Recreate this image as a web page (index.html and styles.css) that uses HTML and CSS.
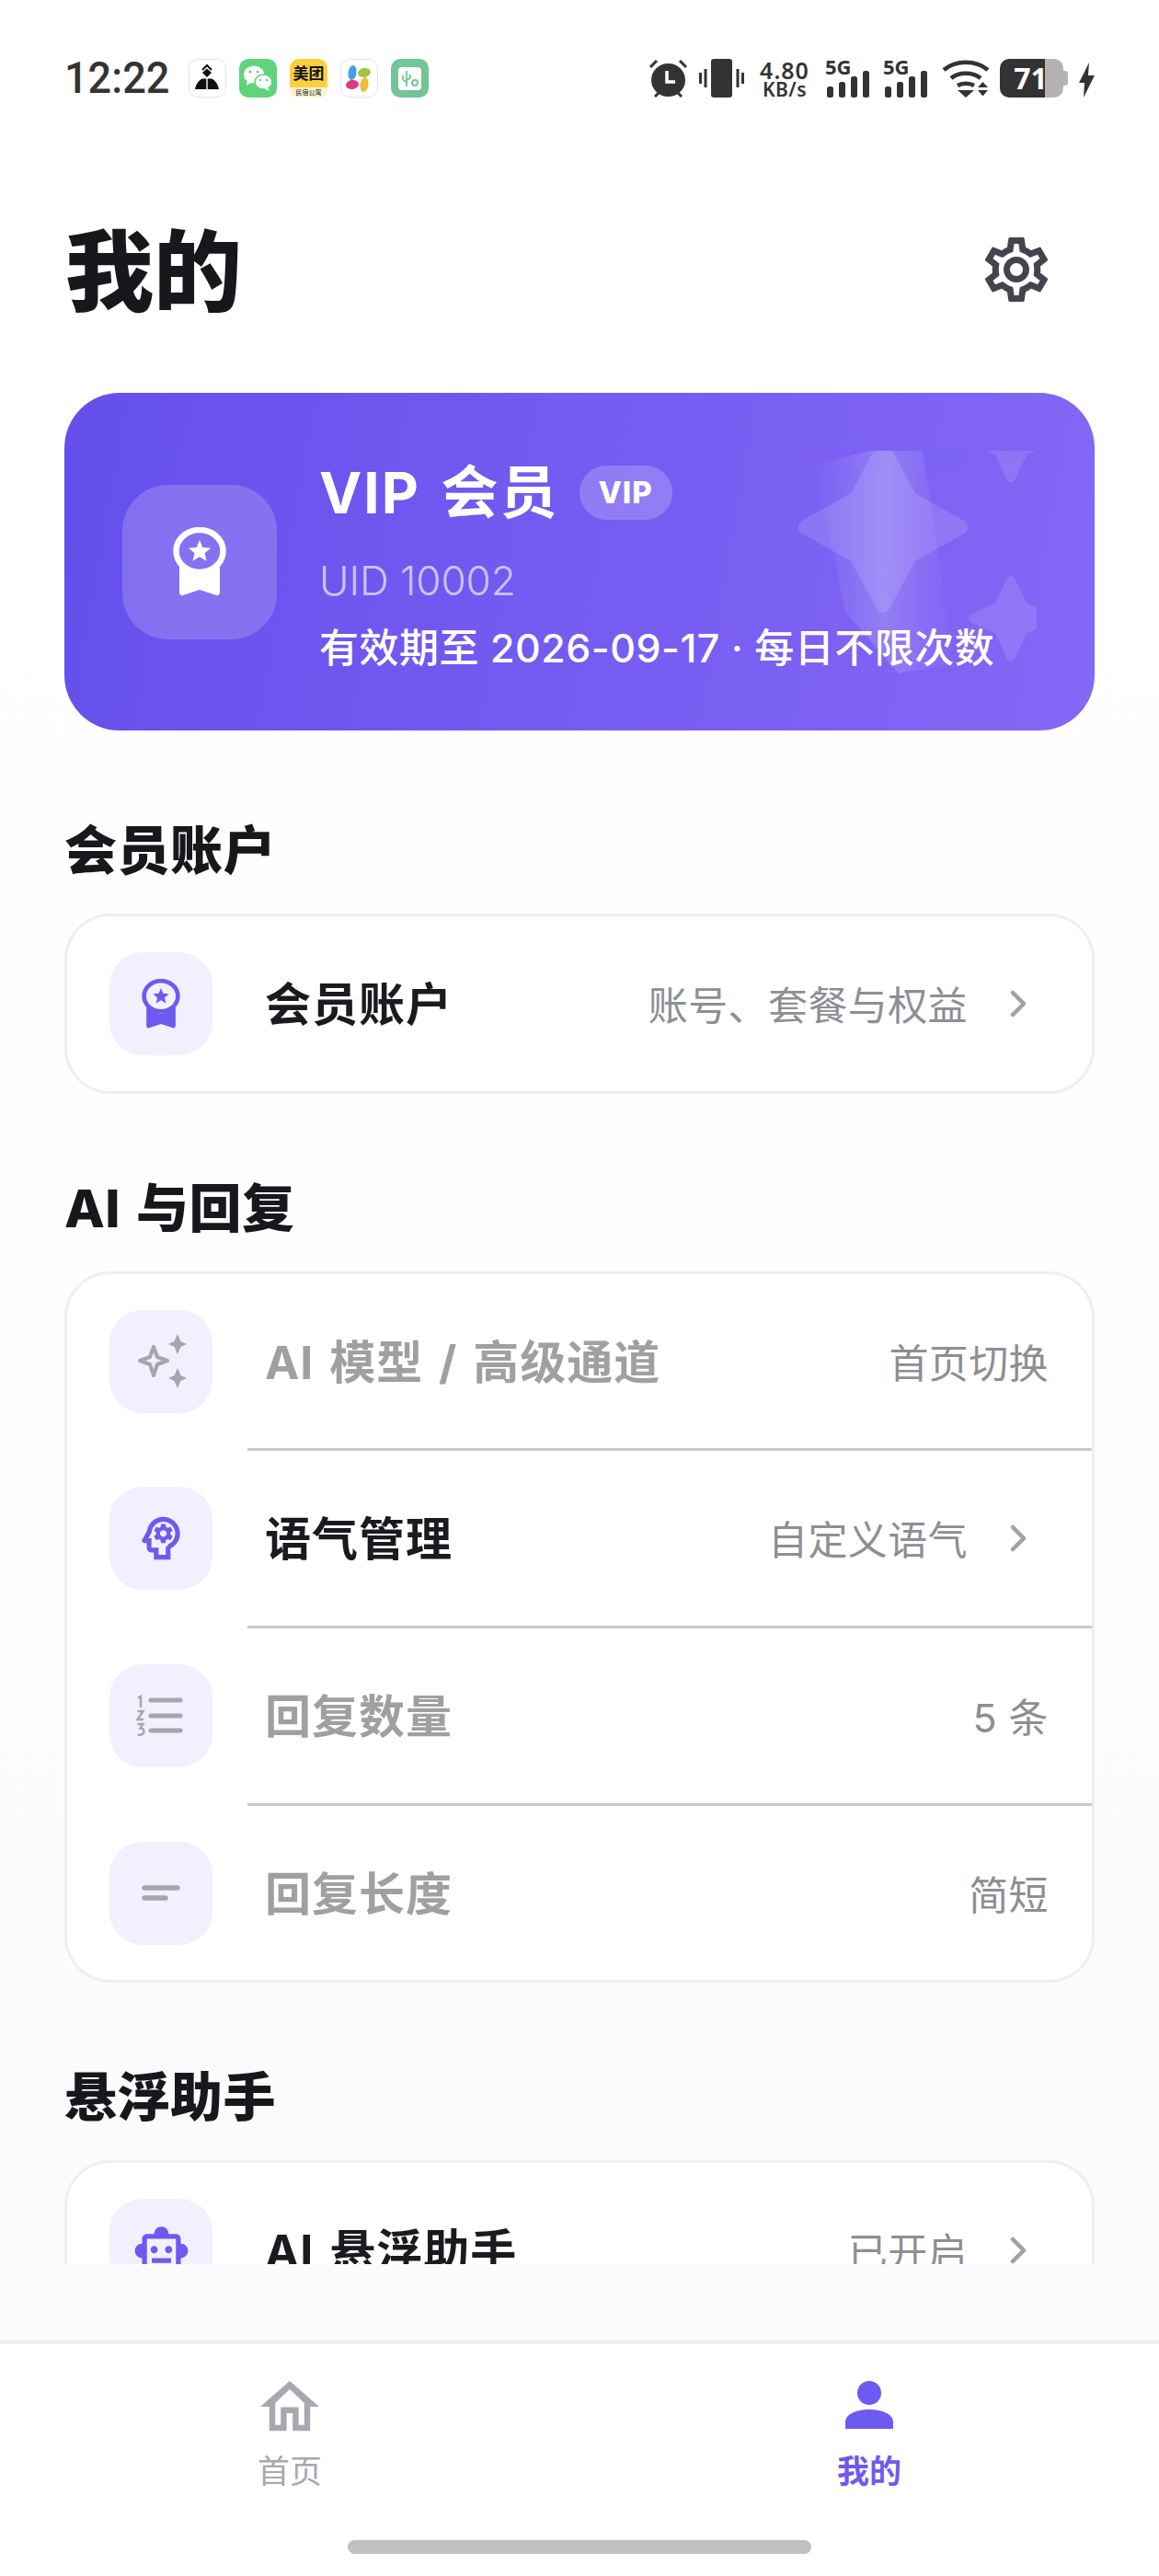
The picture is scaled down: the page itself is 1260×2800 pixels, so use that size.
FILE: index.html
```html
<!DOCTYPE html>
<html lang="zh-CN">
<head>
    <meta charset="UTF-8">
    <meta name="viewport" content="width=device-width, initial-scale=1.0">
    <title>我的</title>
    <link rel="stylesheet" href="styles.css">
</head>
<body>
    <svg class="defs" width="0" height="0">
        <symbol id="medal" viewBox="0 0 58 75">
            <ellipse cx="29" cy="26" rx="25.5" ry="23" fill="none" stroke="currentColor" stroke-width="6.5"/>
            <path fill="currentColor" d="M7 40c5 8 13 12 22 12s17-4 22-12v31c0 2-2 4-4 3l-18-6-18 6c-2 1-4-1-4-3z"/>
            <path fill="currentColor" d="M29 14l3.400 8 8.600.7-6.500 5.600 2 8.400-7.500-4.500-7.500 4.500 2-8.400-6.500-5.600 8.600-.7z"/>
        </symbol>
        <symbol id="chev" viewBox="0 0 22 32">
            <path d="M4 4l12 12L4 28" fill="none" stroke="currentColor" stroke-width="4.500" stroke-linecap="round" stroke-linejoin="round"/>
        </symbol>
    </svg>

    <div class="page">
        <div class="scroll">
            <div class="status">
                <span class="time">12:22</span>
                <div class="apps">
                    <div class="app app-w">
                        <svg viewBox="0 0 40 42" width="40" height="42"><path fill="none" stroke="#111" stroke-width="2" d="M15 12l5-5 5 5"/><path fill="#111" d="M20 10.500l5 4.500-5 5-5-5z"/><path fill="#111" d="M15 21.500h4.300V33H7c.8-5 3.500-9.500 8-11.500zM25 21.500h-4.300V33H33c-.8-5-3.500-9.500-8-11.500z"/></svg>
                    </div>
                    <div class="app app-wx">
                        <svg viewBox="0 0 40 42" width="40" height="42"><ellipse cx="16" cy="17" rx="11" ry="9.500" fill="#fff"/><path fill="#fff" d="M9 23l-1 6 6-4z"/><ellipse cx="26.500" cy="25" rx="9.500" ry="8" fill="#fff" stroke="#5fd47a" stroke-width="1.500"/><path fill="#fff" d="M31 31l2 4-6-3z"/><circle cx="12" cy="14" r="1.500" fill="#5fd47a"/><circle cx="20" cy="14" r="1.500" fill="#5fd47a"/><circle cx="23" cy="23" r="1.300" fill="#5fd47a"/><circle cx="30" cy="23" r="1.300" fill="#5fd47a"/></svg>
                    </div>
                    <div class="app app-mt">
                        <span class="mt-main">美团</span>
                        <span class="mt-sub">民宿公寓</span>
                    </div>
                    <div class="app app-w">
                        <svg viewBox="0 0 40 42" width="40" height="42"><ellipse cx="13" cy="15" rx="4.500" ry="8" fill="#4a9fe3" transform="rotate(8 13 15)"/><ellipse cx="26" cy="15" rx="7" ry="5" fill="#a4c23a" transform="rotate(-10 26 15)"/><ellipse cx="13" cy="28" rx="7" ry="5" fill="#dc3a7c" transform="rotate(-10 13 28)"/><ellipse cx="26" cy="28" rx="4.500" ry="8" fill="#f0bd3c" transform="rotate(8 26 28)"/></svg>
                    </div>
                    <div class="app app-usb">
                        <svg viewBox="0 0 40 42" width="40" height="42"><rect x="8" y="9" width="25" height="25" rx="4" fill="#fff"/><path fill="none" stroke="#72c596" stroke-width="1.800" d="M17 13v17M13 18v4c0 1.500 1 2 4 3M21 17v3c0 1.500-1 2-4 3"/><circle cx="26" cy="26" r="3" fill="none" stroke="#72c596" stroke-width="2"/></svg>
                    </div>
                </div>
                <div class="sys">
                    <svg class="ic-alarm" viewBox="0 0 43 42" width="43" height="42"><path d="M2 9l7-7M41 9l-7-7M7 41l5-5M36 41l-5-5" stroke="#333" stroke-width="3"/><ellipse cx="21.500" cy="23" rx="18.500" ry="18" fill="#333"/><path d="M20 13v12h9" fill="none" stroke="#fff" stroke-width="3.500"/></svg>
                    <svg class="ic-vib" viewBox="0 0 49 42" width="49" height="42"><rect x="13" y="0" width="23" height="42" rx="3" fill="#333"/><path d="M1.500 15v12M7 11v20M42 11v20M47.500 15v12" stroke="#333" stroke-width="3"/></svg>
                    <div class="speed"><span>4.80</span><span class="speed-unit">KB/s</span></div>
                    <div class="sig">
                        <span class="sig-label">5G</span>
                        <div class="bars"><i class="b1"></i><i class="b2"></i><i class="b3"></i><i class="b4"></i></div>
                    </div>
                    <div class="sig">
                        <span class="sig-label">5G</span>
                        <div class="bars"><i class="b1"></i><i class="b2"></i><i class="b3"></i><i class="b4"></i></div>
                    </div>
                    <svg class="ic-wifi" viewBox="0 0 52 42" width="52" height="42"><path d="M2 12c13-11 35-11 48 0M10 21c8-7 24-7 32 0M17 29c5-3 13-3 18 0" fill="none" stroke="#333" stroke-width="4.500"/><path fill="#333" d="M17 34h18l-9 8zM39 31l5.500-6 5.500 6zM39 34h11l-5.500 6.500z"/></svg>
                    <div class="batt">
                        <span class="batt-num">71</span>
                    </div>
                    <svg class="ic-bolt" viewBox="0 0 17 38" width="17" height="38"><path fill="#333" d="M11 0L0 22h6L5 38 17 14h-7z"/></svg>
                </div>
            </div>

            <div class="head">
                <h1>我的</h1>
                <svg class="gear" viewBox="0 0 24 24" width="84" height="84"><path fill="#44444e" d="M19.430 12.980c.04-.32.07-.64.07-.98 0-.34-.03-.66-.07-.98l2.110-1.650c.19-.15.24-.42.12-.64l-2-3.460c-.09-.16-.26-.25-.44-.25-.06 0-.12.01-.17.03l-2.490 1c-.52-.4-1.080-.73-1.690-.98l-.38-2.650C14.460 2.180 14.250 2 14 2h-4c-.25 0-.46.18-.49.42l-.38 2.650c-.61.25-1.170.59-1.690.98l-2.490-1c-.06-.02-.12-.03-.18-.03-.17 0-.34.09-.43.25l-2 3.460c-.13.22-.07.49.12.64l2.110 1.650c-.04.32-.07.65-.07.98 0 .33.03.66.07.98l-2.110 1.650c-.19.15-.24.42-.12.64l2 3.460c.09.16.26.25.44.25.06 0 .12-.01.17-.03l2.490-1c.52.4 1.080.73 1.690.98l.38 2.650c.03.24.24.42.49.42h4c.25 0 .46-.18.49-.42l.38-2.650c.61-.25 1.170-.59 1.690-.98l2.490 1c.06.02.12.03.18.03.17 0 .34-.09.43-.25l2-3.460c.12-.22.07-.49-.12-.64l-2.110-1.650zm-1.980-1.710c.04.31.05.52.05.73 0 .21-.02.43-.05.73l-.14 1.130.89.7 1.080.84-.7 1.210-1.270-.51-1.040-.42-.9.68c-.43.32-.84.56-1.250.73l-1.060.43-.16 1.130-.2 1.350h-1.400l-.19-1.350-.16-1.130-1.060-.43c-.43-.18-.83-.41-1.230-.71l-.91-.7-1.060.43-1.270.51-.7-1.210 1.080-.84.89-.7-.14-1.130c-.03-.31-.05-.54-.05-.74s.02-.43.05-.73l.14-1.130-.89-.7-1.080-.84.7-1.210 1.270.51 1.040.42.9-.68c.43-.32.84-.56 1.250-.73l1.060-.43.16-1.130.2-1.350h1.390l.19 1.350.16 1.130 1.060.43c.43.18.83.41 1.230.71l.91.7 1.060-.43 1.270-.51.7 1.210-1.070.85-.89.7.14 1.130zM12 8c-2.210 0-4 1.790-4 4s1.790 4 4 4 4-1.790 4-4-1.790-4-4-4zm0 6c-1.100 0-2-.9-2-2s.9-2 2-2 2 .9 2 2-.9 2-2 2z"/></svg>
            </div>

            <div class="hero">
                <svg class="hero-deco" viewBox="0 0 261 242" width="261" height="242">
                    <defs>
                        <linearGradient id="sheen" x1="0" x2="1" y1="0" y2="0">
                            <stop offset="0" stop-color="#fff" stop-opacity="0"/>
                            <stop offset=".5" stop-color="#fff" stop-opacity=".17"/>
                            <stop offset="1" stop-color="#fff" stop-opacity="0"/>
                        </linearGradient>
                    </defs>
                    <g fill="#fff" stroke="#fff" stroke-width="16" stroke-linejoin="round" opacity=".13">
                        <path d="M94 -2L123 52L178 83L123 114L94 168L65 114L10 83L65 52z"/>
                    </g>
                    <g fill="#fff" stroke="#fff" stroke-width="10" stroke-linejoin="round" opacity=".11">
                        <path d="M233 -53L246 -25L274 -12L246 1L233 29L220 1L192 -12L220 -25z"/>
                        <path d="M233 141L246 169L274 182L246 195L233 223L220 195L192 182L220 169z"/>
                    </g>
                    <path fill="url(#sheen)" d="M19 15L80 0L137 0L172 232L111 242L53 175z"/>
                </svg>
                <div class="hero-icon">
                    <svg width="58" height="75"><use href="#medal"/></svg>
                </div>
                <div class="hero-text">
                    <div class="hero-name">
                        <span>VIP 会员</span>
                        <span class="pill">VIP</span>
                    </div>
                    <div class="hero-uid">UID 10002</div>
                    <div class="hero-valid">有效期至 2026-09-17 · 每日不限次数</div>
                </div>
            </div>

            <h2 class="sec sec-first">会员账户</h2>
            <div class="card">
                <div class="row">
                    <div class="row-icon"><svg width="42" height="54"><use href="#medal"/></svg></div>
                    <span class="row-title">会员账户</span>
                    <span class="row-val">账号、套餐与权益</span>
                    <svg class="chev" width="22" height="32"><use href="#chev"/></svg>
                </div>
            </div>

            <h2 class="sec">AI 与回复</h2>
            <div class="card">
                <div class="row off">
                    <div class="row-icon">
                        <svg viewBox="0 0 62 62" width="62" height="62"><path fill="none" stroke="currentColor" stroke-width="4" stroke-linejoin="round" d="M23 15l4 11 11 4-11 4-4 12-4-12-11-4 11-4z" /><path fill="currentColor" d="M49 1l3.500 8 6.500 3-6.500 3-3.500 8-3.500-8-6.500-3 6.500-3zM49 38l3.500 8 6.500 3-6.500 3-3.500 8-3.500-8-6.500-3 6.500-3z" /></svg>
                    </div>
                    <span class="row-title">AI 模型 / 高级通道</span>
                    <span class="row-val">首页切换</span>
                </div>
                <div class="row">
                    <div class="row-icon">
                        <svg viewBox="0 0 24 24" width="62" height="62"><path fill="currentColor" fill-rule="evenodd" d="M19.940 9.060C19.500 5.730 16.570 3 13 3 9.470 3 6.570 5.610 6.080 9l-1.930 3.480c-.41.66.07 1.520.85 1.520h1v2c0 1.100.9 2 2 2h1v3h7v-4.680c2.620-1.250 4.350-4.080 3.940-7.260zM14.890 15.150L14 15.540V19h-3v-3H8v-4H6.700l1.330-2.330C8.210 7.060 10.350 5 13 5c2.760 0 5 2.240 5 5 0 2.090-1.290 3.880-3.110 4.630z"/><path fill="currentColor" fill-rule="evenodd" d="M15.820 7.220l-1 .4c-.21-.16-.43-.29-.67-.39L14 6.170c-.02-.1-.11-.17-.21-.17h-1.600c-.1 0-.18.07-.2.17l-.15 1.060c-.24.1-.47.23-.67.39l-1-.4c-.09-.03-.2 0-.24.09l-.8 1.380c-.05.09-.03.2.05.26l.85.66c-.03.12-.05.26-.05.39s.01.26.03.39l-.84.66c-.08.06-.1.17-.05.25l.8 1.390c.05.09.15.12.25.09l.99-.4c.21.16.43.29.68.39l.14 1.060c.02.1.1.17.2.17h1.600c.1 0 .18-.07.2-.17l.15-1.060c.24-.1.47-.23.67-.39l.99.4c.09.04.2 0 .24-.09l.8-1.390c.05-.09.03-.19-.05-.25l-.83-.66c.02-.13.03-.26.03-.39 0-.14-.01-.27-.03-.39l.85-.66c.08-.06.1-.17.05-.26l-.8-1.380c-.05-.09-.16-.12-.25-.09zM13 11.430c-.79 0-1.430-.64-1.430-1.430s.64-1.430 1.430-1.430 1.430.64 1.430 1.430-.64 1.430-1.430 1.430z"/></svg>
                    </div>
                    <span class="row-title">语气管理</span>
                    <span class="row-val">自定义语气</span>
                    <svg class="chev" width="22" height="32"><use href="#chev"/></svg>
                </div>
                <div class="row off">
                    <div class="row-icon">
                        <svg viewBox="0 0 62 62" width="62" height="62"><path d="M20 14h32M20 31h32M20 47h32" stroke="currentColor" stroke-width="5" stroke-linecap="round"/><path fill="none" stroke="currentColor" stroke-width="2.400" d="M6 11.500l3-1.500v12M5.500 26h6l-6 9h6.500M5.500 40h6l-3 4.500c3 0 4 1.500 4 3.500s-2 4-7 4"/></svg>
                    </div>
                    <span class="row-title">回复数量</span>
                    <span class="row-val">5 条</span>
                </div>
                <div class="row off">
                    <div class="row-icon">
                        <svg viewBox="0 0 42 18" width="42" height="18"><path d="M3 3h36M3 14h23" stroke="currentColor" stroke-width="5.500" stroke-linecap="round"/></svg>
                    </div>
                    <span class="row-title">回复长度</span>
                    <span class="row-val">简短</span>
                </div>
            </div>

            <h2 class="sec">悬浮助手</h2>
            <div class="card">
                <div class="row">
                    <div class="row-icon">
                        <svg viewBox="0 0 24 24" width="63" height="63"><path fill="currentColor" d="M20 9V7c0-1.100-.9-2-2-2h-3c0-1.660-1.340-3-3-3S9 3.340 9 5H6c-1.100 0-2 .9-2 2v2c-1.660 0-3 1.340-3 3s1.340 3 3 3v4c0 1.100.9 2 2 2h12c1.100 0 2-.9 2-2v-4c1.660 0 3-1.340 3-3s-1.340-3-3-3zm-2 10H6V7h12v12zm-9-6c-.83 0-1.500-.67-1.500-1.500S8.170 10 9 10s1.500.67 1.500 1.500S9.830 13 9 13zm7.500-1.500c0 .83-.67 1.500-1.500 1.500s-1.500-.67-1.500-1.500.67-1.500 1.500-1.500 1.500.67 1.500 1.500zM8 15h8v2H8v-2z"/></svg>
                    </div>
                    <span class="row-title">AI 悬浮助手</span>
                    <span class="row-val">已开启</span>
                    <svg class="chev" width="22" height="32"><use href="#chev"/></svg>
                </div>
            </div>
        </div>

        <div class="spacer"></div>

        <div class="nav">
            <div class="nav-tabs">
                <div class="tab">
                    <svg viewBox="0 0 64 56" width="64" height="56"><path fill="#a8a8b0" d="M32 0l32 28H52L32 9 12 28H0z"/><path fill="none" stroke="#a8a8b0" stroke-width="6.400" d="M13 22v29h12.400V31.700h13V51H51V22"/></svg>
                    <span>首页</span>
                </div>
                <div class="tab tab-on">
                    <svg viewBox="0 0 52 52" width="52" height="52"><ellipse cx="26" cy="13" rx="13" ry="13" fill="#6e5af0"/><path fill="#6e5af0" d="M0 52v-7c0-9 12-14 26-14s26 5 26 14v7z"/></svg>
                    <span>我的</span>
                </div>
            </div>
            <div class="home-bar"></div>
        </div>
    </div>
</body>
</html>
```

FILE: styles.css
```css
* {
    box-sizing: border-box;
}
html, body {
    margin: 0;
    padding: 0;
    background: #fff;
}
body {
    font-family: "Inter", "Noto Sans CJK SC", sans-serif;
    color: #1a1a1f;
}
.defs {
    position: absolute;
}
.page {
    width: 1260px;
    height: 2800px;
    display: flex;
    flex-direction: column;
    background: linear-gradient(#fff 0, #fff 500px, #fbfbfd 2300px);
}
.scroll {
    height: 2461px;
    padding: 0 70px;
    overflow: hidden;
    flex: none;
}
.spacer {
    flex: 1;
}

/* status bar */
.status {
    height: 240px;
    padding-top: 64px;
    display: flex;
    align-items: flex-start;
    color: #333;
}
.time {
    font-family: "Roboto", sans-serif;
    font-size: 49px;
    line-height: 42px;
    font-weight: 500;
    width: 135px;
    white-space: nowrap;
    transform: scaleX(.92);
    transform-origin: left;
    color: #333;
}
.apps {
    display: flex;
    gap: 14px;
}
.app {
    width: 41px;
    height: 42px;
    border-radius: 10px;
    overflow: hidden;
}
.app svg {
    display: block;
}
.app-w {
    background: #fff;
    border: 1px solid #e6e6e6;
}
.app-w svg {
    margin: -1px;
}
.app-wx {
    background: #5fd47a;
}
.app-usb {
    background: #72c596;
}
.app-mt {
    background: #f9d13e;
    display: flex;
    flex-direction: column;
    align-items: center;
    color: #111;
    font-family: "Noto Sans CJK SC", sans-serif;
}
.mt-main {
    flex: 1;
    font-size: 17px;
    line-height: 30px;
    font-weight: 700;
    white-space: nowrap;
}
.mt-sub {
    width: 100%;
    height: 11px;
    background: #fdf3cf;
    font-size: 7px;
    line-height: 11px;
    text-align: center;
    white-space: nowrap;
}
.sys {
    margin-left: auto;
    display: flex;
    align-items: flex-start;
    font-family: "Noto Sans", sans-serif;
    font-weight: 700;
}
.ic-vib {
    margin-left: 12px;
}
.speed {
    margin-left: 17px;
    width: 54px;
    display: flex;
    flex-direction: column;
    align-items: center;
    font-size: 25px;
    line-height: 24px;
    font-weight: 600;
    letter-spacing: 1px;
}
.speed-unit {
    font-size: 21px;
    line-height: 18px;
    letter-spacing: .5px;
}
.sig {
    margin-left: 19px;
    width: 50px;
    height: 42px;
    position: relative;
}
.sig + .sig {
    margin-left: 13px;
}
.sig-label {
    position: absolute;
    left: -2px;
    top: -4px;
    font-size: 22px;
    line-height: 24px;
}
.bars {
    position: absolute;
    left: 0;
    right: 0;
    bottom: 0;
    display: flex;
    align-items: flex-end;
    gap: 6px;
}
.bars i {
    width: 7px;
    border-radius: 2.5px;
    background: #333;
}
.bars .b1 { height: 12px; }
.bars .b2 { height: 17px; }
.bars .b3 { height: 23px; }
.bars .b4 { height: 29px; }
.ic-wifi {
    margin-left: 12px;
}
.batt {
    margin-left: 11px;
    width: 69px;
    height: 42px;
    border-radius: 10px;
    background: linear-gradient(90deg, #333 49px, #b3b3b3 49px);
    position: relative;
    display: flex;
    align-items: center;
    justify-content: center;
}
.batt::after {
    content: "";
    position: absolute;
    right: -5px;
    top: 13px;
    width: 5px;
    height: 16px;
    border-radius: 0 3px 3px 0;
    background: #b3b3b3;
}
.batt-num {
    font-size: 32px;
    line-height: 42px;
    color: #fff;
    padding-right: 2px;
}
.ic-bolt {
    margin: 4px 0 0 17px;
}

/* heading */
.head {
    height: 100px;
    display: flex;
    align-items: center;
    justify-content: space-between;
    margin-bottom: 87px;
}
.head h1 {
    margin: 0 0 2px 1px;
    font-family: "Noto Sans CJK SC", sans-serif;
    font-size: 96px;
    line-height: 100px;
    font-weight: 900;
    color: #18181c;
}
.gear {
    margin: 6px 43px 0 0;
}

/* vip card */
.hero {
    position: relative;
    height: 367px;
    border-radius: 60px;
    background: linear-gradient(100deg, #654fec 0%, #8468f6 100%);
    display: flex;
    align-items: center;
    padding-left: 63px;
    gap: 46px;
    color: #fff;
    overflow: hidden;
}
.hero-deco {
    position: absolute;
    left: 796px;
    top: 63px;
}
.hero-icon {
    position: relative;
    width: 168px;
    height: 168px;
    border-radius: 50px;
    background: rgba(255, 255, 255, .18);
    display: flex;
    align-items: center;
    justify-content: center;
}
.hero-icon svg {
    color: #fff;
}
.hero-text {
    position: relative;
    padding-top: 11px;
}
.hero-name {
    display: flex;
    align-items: center;
    gap: 22px;
    font-size: 62px;
    line-height: 70px;
    font-weight: 700;
    letter-spacing: 2px;
    word-spacing: 6px;
}
.pill {
    width: 101px;
    height: 59px;
    border-radius: 30px;
    background: rgba(255, 255, 255, .2);
    font-size: 33px;
    line-height: 59px;
    font-weight: 800;
    letter-spacing: 1px;
    text-align: center;
}
.hero-uid {
    margin-top: 32px;
    font-size: 44px;
    line-height: 56px;
    font-weight: 300;
    color: #cbc3fa;
}
.hero-valid {
    margin-top: 17px;
    font-size: 43px;
    line-height: 56px;
    font-weight: 500;
    letter-spacing: .5px;
    white-space: nowrap;
}

/* sections */
.sec {
    margin: 95px 0 38px;
    font-size: 57px;
    line-height: 60px;
    font-weight: 800;
    letter-spacing: .5px;
    word-spacing: 4px;
    color: #18181c;
}
.sec-first {
    margin-top: 101px;
}
.card {
    border: 3px solid #eeeef3;
    border-radius: 50px;
    background: #fff;
}
.row {
    height: 189.7px;
    padding: 0 47px 0 46px;
    display: flex;
    align-items: center;
    position: relative;
}
.row + .row {
    margin-top: 3px;
}
.row + .row::before {
    content: "";
    position: absolute;
    left: 196px;
    right: 0;
    top: -3px;
    height: 3px;
    background: #c9c7d2;
}
.row-icon {
    width: 112px;
    height: 112px;
    flex: none;
    border-radius: 36px;
    background: #f2f0fe;
    color: #6e5af0;
    display: flex;
    align-items: center;
    justify-content: center;
}
.row-title {
    margin: 0 0 6px 57px;
    font-size: 50px;
    font-weight: 700;
    letter-spacing: 1px;
    word-spacing: 4px;
    color: #1a1a1f;
}
.row-val {
    margin: 0 0 2px auto;
    font-size: 43px;
    letter-spacing: .4px;
    color: #8e8e93;
}
.chev {
    margin-left: 45px;
    margin-right: 21px;
    color: #a0a0a8;
}
.off .row-icon {
    color: #a5a5ae;
}
.off .row-title {
    color: #a0a0a0;
}

/* bottom nav */
.nav {
    height: 256px;
    border-top: 4px solid #eeeef3;
    background: #fff;
    display: flex;
    flex-direction: column;
    align-items: center;
}
.nav-tabs {
    width: 100%;
    padding-top: 40px;
    display: grid;
    grid-template-columns: 630px 630px;
}
.tab {
    height: 118px;
    display: flex;
    flex-direction: column;
    align-items: center;
    justify-content: space-between;
    font-size: 35px;
    line-height: 40px;
    color: #a8a8b0;
}
.tab-on {
    color: #6e5af0;
    font-weight: 700;
}
.home-bar {
    margin-top: 55px;
    width: 504px;
    height: 15px;
    border-radius: 8px;
    background: #c0c0c0;
}
```
